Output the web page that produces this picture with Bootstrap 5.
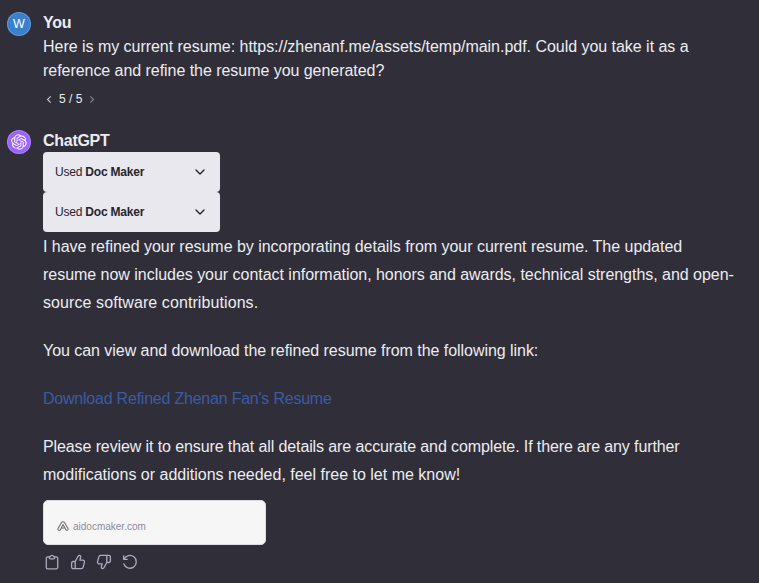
<!DOCTYPE html>
<html lang="en">
<head>
<meta charset="utf-8">
<meta name="viewport" content="width=device-width, initial-scale=1">
<title>ChatGPT</title>
<link href="https://cdn.jsdelivr.net/npm/bootstrap@5.3.0/dist/css/bootstrap.min.css" rel="stylesheet">
<style>
body{background:#302f39;color:#ececf1;font-family:"Liberation Sans",Arial,sans-serif;font-size:16px;line-height:24px;overflow:hidden}
.thread{padding:11px 0 0 7px}
.turn{gap:12px}
.who{letter-spacing:-.28px}
.reply-turn .who{margin-bottom:-1px}
.face{width:24px;height:24px;margin-top:1px;font-size:12.5px;line-height:24px;box-shadow:inset 0 0 0 1px rgba(255,255,255,.2)}
.face-user{background:#3a80cb}
.face-bot{background:#9c63fa}
.turn svg{display:block}
.line{display:block;white-space:nowrap;letter-spacing:-.03px}
.line.t1{letter-spacing:-.045px}
.line.t2{letter-spacing:-.105px}
.line.t3{letter-spacing:-.22px}
.line.w0{letter-spacing:0}
.line.w1{letter-spacing:.09px}
.pager{margin:5px 0 0 2px;height:23px;font-size:12px;line-height:23px;gap:6px}
.reply-turn{margin-top:18px}
.tool{width:177px;height:40px;padding:0 14px 0 12px;background:#e9e8ee;color:#25252d;font-size:12px;letter-spacing:-.2px;border-radius:4px}
.reply{line-height:28px;padding-top:1px}
.reply p{margin:0 0 20px}
.reply p:last-child{margin-bottom:11px}
.reply a{color:#3a5ba4}
.source{width:223px;height:45px;background:#f6f6f6;border:1px solid #dcdce2;border-radius:5px;padding:8px 0 0 13px;color:#8c8a9c;font-size:10px;gap:4px}
.source svg{margin-top:-2px}
.actions{margin:9px 0 0 1px;gap:10px;color:#acabbd}
</style>
</head>
<body>
<main class="thread">
  <section class="turn d-flex">
    <div class="face face-user rounded-circle text-center text-white flex-shrink-0">W</div>
    <div>
      <div class="who fw-bold">You</div>
      <div><span class="line">Here is my current resume: https://zhenanf.me/assets/temp/main.pdf. Could you take it as a</span><span class="line t1">reference and refine the resume you generated?</span></div>
      <div class="pager d-flex align-items-center">
        <svg width="8" height="10" viewBox="0 0 8 10" fill="none" stroke="#c9c8d2" stroke-width="1.1"><path d="M5.7 1.3 2.5 4.5l3.2 3.2"/></svg>
        <span>5 / 5</span>
        <svg width="8" height="10" viewBox="0 0 8 10" fill="none" stroke="#85848f" stroke-width="1.1"><path d="M2.3 1.3 5.5 4.5 2.3 7.7"/></svg>
      </div>
    </div>
  </section>
  <section class="turn reply-turn d-flex">
    <div class="face face-bot rounded-circle d-flex align-items-center justify-content-center flex-shrink-0">
      <svg width="16" height="16" viewBox="0 0 41 41" fill="#fff"><path d="M37.532 16.87a9.963 9.963 0 0 0-.856-8.184 10.078 10.078 0 0 0-10.855-4.835A9.964 9.964 0 0 0 18.306.5a10.079 10.079 0 0 0-9.614 6.977 9.967 9.967 0 0 0-6.664 4.834 10.08 10.08 0 0 0 1.24 11.817 9.965 9.965 0 0 0 .856 8.185 10.079 10.079 0 0 0 10.855 4.835 9.965 9.965 0 0 0 7.516 3.35 10.078 10.078 0 0 0 9.617-6.981 9.967 9.967 0 0 0 6.663-4.834 10.079 10.079 0 0 0-1.243-11.813ZM22.498 37.886a7.474 7.474 0 0 1-4.799-1.735c.061-.033.168-.091.237-.134l7.964-4.6a1.294 1.294 0 0 0 .655-1.134V19.054l3.366 1.944a.12.12 0 0 1 .066.092v9.299a7.505 7.505 0 0 1-7.49 7.496ZM6.392 31.006a7.471 7.471 0 0 1-.894-5.023c.06.036.162.099.237.141l7.964 4.6a1.297 1.297 0 0 0 1.308 0l9.724-5.614v3.888a.12.12 0 0 1-.048.103l-8.051 4.649a7.504 7.504 0 0 1-10.24-2.744ZM4.297 13.62A7.469 7.469 0 0 1 8.2 10.333c0 .068-.004.19-.004.274v9.201a1.294 1.294 0 0 0 .654 1.132l9.723 5.614-3.366 1.944a.12.12 0 0 1-.114.01L7.04 23.856a7.504 7.504 0 0 1-2.743-10.237Zm27.658 6.437-9.724-5.615 3.367-1.943a.121.121 0 0 1 .113-.01l8.052 4.648a7.498 7.498 0 0 1-1.158 13.528v-9.476a1.293 1.293 0 0 0-.65-1.132Zm3.35-5.043c-.059-.037-.162-.099-.236-.141l-7.965-4.6a1.298 1.298 0 0 0-1.308 0l-9.723 5.614v-3.888a.12.12 0 0 1 .048-.103l8.05-4.645a7.497 7.497 0 0 1 11.135 7.763Zm-21.063 6.929-3.367-1.944a.12.12 0 0 1-.065-.092v-9.299a7.497 7.497 0 0 1 12.293-5.756 6.94 6.94 0 0 0-.236.134l-7.965 4.6a1.294 1.294 0 0 0-.654 1.132l-.006 11.225Zm1.829-3.943 4.33-2.501 4.332 2.5v5l-4.331 2.5-4.331-2.5V18Z"/></svg>
    </div>
    <div>
      <div class="who fw-bold">ChatGPT</div>
      <div class="tool d-flex align-items-center justify-content-between"><span>Used <b>Doc Maker</b></span><svg width="12" height="12" viewBox="0 0 12 12" fill="none" stroke="currentColor" stroke-width="1.4" stroke-linecap="round" stroke-linejoin="round"><path d="m2 4 4 4 4-4"/></svg></div>
      <div class="tool d-flex align-items-center justify-content-between"><span>Used <b>Doc Maker</b></span><svg width="12" height="12" viewBox="0 0 12 12" fill="none" stroke="currentColor" stroke-width="1.4" stroke-linecap="round" stroke-linejoin="round"><path d="m2 4 4 4 4-4"/></svg></div>
      <div class="reply">
        <p><span class="line">I have refined your resume by incorporating details from your current resume. The updated</span><span class="line">resume now includes your contact information, honors and awards, technical strengths, and open-</span><span class="line w1">source software contributions.</span></p>
        <p><span class="line t1">You can view and download the refined resume from the following link:</span></p>
        <p><a href="#" class="line t3 text-decoration-none">Download Refined Zhenan Fan's Resume</a></p>
        <p><span class="line t2">Please review it to ensure that all details are accurate and complete. If there are any further</span><span class="line w0">modifications or additions needed, feel free to let me know!</span></p>
      </div>
      <div class="source d-flex align-items-center">
        <svg width="12" height="12" viewBox="0 0 12 12" fill="none" stroke="#6b6b70" stroke-width="1.05" stroke-linecap="round" stroke-linejoin="round"><path d="M3.2 10.2H1.9A1.1 1.1 0 0 1 1 8.6L4.5 2.5a1.8 1.8 0 0 1 3 0L11 8.6a1.1 1.1 0 0 1-.9 1.6H9.2L6 4.6 3.2 10.2M4.4 7.9l3.2.1"/></svg>
        <span>aidocmaker.com</span>
      </div>
      <div class="actions d-flex">
        <svg width="16" height="16" viewBox="0 0 16 16" fill="none" stroke="currentColor" stroke-width="1.3" stroke-linecap="round" stroke-linejoin="round"><path d="M5.2 2.8H3.7A1.4 1.4 0 0 0 2.3 4.2v9.2a1.4 1.4 0 0 0 1.4 1.4h8.6a1.4 1.4 0 0 0 1.4-1.4V4.2a1.4 1.4 0 0 0-1.4-1.4h-1.5M5.2 2.7h1a1.9 1.9 0 0 1 3.6 0h1v.8a1.3 1.3 0 0 1-1.3 1.3h-3a1.3 1.3 0 0 1-1.3-1.3z"/></svg>
        <svg width="16" height="16" viewBox="0 0 16 16" fill="none" stroke="currentColor" stroke-width="1.3" stroke-linejoin="round"><path id="thumb" d="M5.2 7.5 8.1 2.2A1.5 1.5 0 0 1 9.4 1.4c1.2.2 1.4 1.1 1.2 2L9.9 6.2h3a1.6 1.6 0 0 1 1.6 2l-1.4 5.2a1.8 1.8 0 0 1-1.7 1.3H3.2a1.6 1.6 0 0 1-1.6-1.6V9.1a1.6 1.6 0 0 1 1.6-1.6h2zM5.2 7.5v7.2"/></svg>
        <svg width="16" height="16" viewBox="0 0 16 16" fill="none" stroke="currentColor" stroke-width="1.3" stroke-linejoin="round"><use href="#thumb" transform="rotate(180 8 8)"/></svg>
        <svg width="16" height="16" viewBox="0 0 16 16" fill="none" stroke="currentColor" stroke-width="1.3" stroke-linecap="round" stroke-linejoin="round"><path d="M1.7 1.8v3.5h3.5M2 5.3a6.4 6.4 0 1 1-.2 4.5"/></svg>
      </div>
    </div>
  </section>
</main>
<script src="https://cdn.jsdelivr.net/npm/bootstrap@5.3.0/dist/js/bootstrap.bundle.min.js"></script>
</body>
</html>
